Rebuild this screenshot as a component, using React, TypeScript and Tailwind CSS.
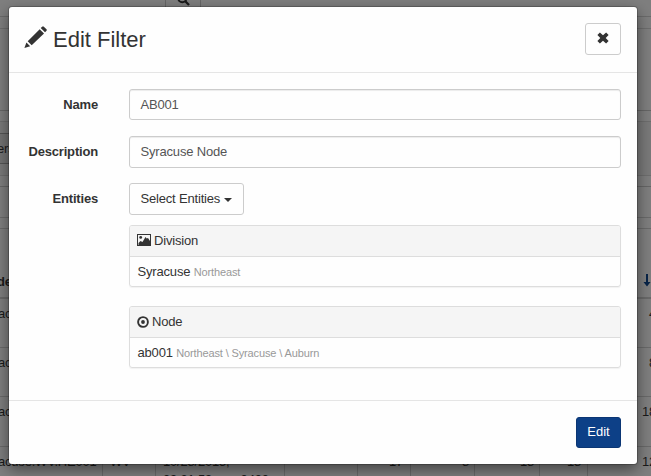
import React from "react";

const hiddenRows = [
  { last: "4", height: "h-[49px]" },
  { last: "8", height: "h-[49px]" },
  { last: "18", height: "h-[50px]" },
];

function Pencil() {
  return (
    <svg className="h-[24px] w-[24px] shrink-0" viewBox="0 0 24 24" fill="#333333">
      <path d="M18.2 1.7 Q19 .9 19.8 1.7 L22.5 4.3 Q23.2 5 22.5 5.8 L21 7.3 L16.7 3.1Z" />
      <path d="M15.7 4.2 L20 8.4 L7.7 20.2 L3.7 16.2Z" />
      <path d="M2.4 17.4 L6.2 21.2 L.4 23Z" />
    </svg>
  );
}

function Cross() {
  return (
    <svg className="h-3 w-3" viewBox="0 0 12 12" fill="#333333">
      <path d="M2.9 .4 6 3.3 9.1 .4 11.6 2.9 8.7 6 11.6 9.1 9.1 11.6 6 8.7 2.9 11.6 .4 9.1 3.3 6 .4 2.9Z" />
    </svg>
  );
}

function Picture() {
  return (
    <svg className="h-3 w-[14px] -translate-y-px" viewBox="0 0 14 12" fill="#333333">
      <path fillRule="evenodd" d="M0 0h14v12H0z M1 1v10h12V1z" />
      <circle cx="3.7" cy="3.4" r="1.4" />
      <path d="M1.5 11V9l2-2 2 1 3-5 1.2 1.6L11 4l2 3v4z" />
    </svg>
  );
}

function Target() {
  return (
    <svg className="h-3 w-3" viewBox="0 0 12 12">
      <circle cx="6" cy="6" r="4.9" fill="none" stroke="#333333" strokeWidth="1.9" />
      <circle cx="6" cy="6" r="1.9" fill="#333333" />
    </svg>
  );
}

function Backdrop() {
  return (
    <div className="flex h-[476px] w-[651px] flex-col overflow-hidden bg-[#7f7f7f] text-[13px] leading-[18px] tracking-[-0.2px] text-[#1a1a1a]">
      <div className="flex h-[17px] shrink-0 border-b border-[#6b6b6b] pl-[165px]">
        <div className="flex h-[10px] w-9 justify-center border-x border-[#666666]">
          <svg className="-mt-[7px] h-[13px] w-[13px]" viewBox="0 0 13 13" fill="none" stroke="#1a1a1a">
            <circle cx="5.3" cy="5.3" r="4" strokeWidth="2" />
            <path d="M8.3 8.3 12 12" strokeWidth="2.3" />
          </svg>
        </div>
      </div>
      <div className="h-3 shrink-0 border-b border-[#6e6e6e]" />
      <div className="h-[82px] shrink-0 border-b border-[#666666]" />
      <div className="h-[11px] shrink-0 border-b border-[#6e6e6e]" />
      <div className="h-[54px] shrink-0 border-b border-[#6e6e6e] bg-[#7a7a7a] pt-[11px]">
        <div className="h-[31px] w-8 border-y border-[#555555] bg-[#737373] pt-1.5">
          <span className="-ml-[3px]">ers</span>
        </div>
      </div>
      <div className="h-[11px] shrink-0 border-b border-[#666666]" />
      <div className="h-[31px] shrink-0 border-b border-[#6a6a6a]" />
      <div className="h-[11px] shrink-0 border-b border-[#6a6a6a]" />
      <div className="flex h-[70px] shrink-0 items-end justify-between border-b-2 border-[#6a6a6a] pb-[6px] font-bold">
        <span className="-ml-[3px]">de</span>
        <svg className="mb-1 h-[13px] w-2" viewBox="0 0 8 13" fill="#082448">
          <path d="M3 0h2v8h2.5L4 12.5.5 8H3z" />
        </svg>
      </div>
      {hiddenRows.map((row) => (
        <div
          key={row.last}
          className={`flex shrink-0 justify-between border-b border-[#6a6a6a] pt-[6px] ${row.height}`}
        >
          <span className="-ml-0.5">ac</span>
          <span className="-mr-[5px]">{row.last}</span>
        </div>
      ))}
      <div className="flex h-[50px] shrink-0 *:shrink-0 *:border-r *:border-[#6a6a6a] *:pt-[6px]">
        <div className="w-[103px]">
          <span className="-ml-0.5">acuse.WV.HE001</span>
        </div>
        <div className="w-[53px] pl-[7px]">WV</div>
        <div className="w-[129px] pl-[7px]">
          10/28/2015,
          <br />
          09:31:59 am -0400
        </div>
        <div className="w-[73px]" />
        <div className="w-[53px] pr-[7px] text-right">17</div>
        <div className="w-[64px] pr-[5px] text-right">8</div>
        <div className="w-[65px] pr-[5px] text-right">18</div>
        <div className="w-[48px] pr-1.5 text-right">18</div>
        <div className="w-[70px] pr-px text-right">12</div>
      </div>
    </div>
  );
}

function Field({ label, children }: { label: string; children: React.ReactNode }) {
  return (
    <div className="flex">
      <div className="w-[89px] shrink-0 pt-[7px] text-right font-bold">{label}</div>
      <div className="ml-[31px] w-[492px]">{children}</div>
    </div>
  );
}

function TextInput({ value, height }: { value: string; height: string }) {
  return (
    <div
      className={`flex items-center rounded-[3px] border border-[#cccccc] pl-[10.5px] text-[#555555] shadow-[inset_0_1px_1px_rgba(0,0,0,0.075)] ${height}`}
    >
      {value}
    </div>
  );
}

function Panel({
  icon,
  title,
  name,
  path,
  className,
}: {
  icon: React.ReactNode;
  title: string;
  name: string;
  path: string;
  className: string;
}) {
  return (
    <div className={`h-[62px] rounded-[3px] border border-[#dddddd] shadow-[0_1px_1px_rgba(0,0,0,0.05)] ${className}`}>
      <div className="flex h-[31px] items-center gap-[3px] rounded-t-[2px] border-b border-[#dddddd] bg-[#f5f5f5] pl-[7px]">
        {icon}
        <span>{title}</span>
      </div>
      <div className="h-[29px] pl-[7.5px] leading-[29px]">
        {name} <span className="text-[11px] tracking-[-0.13px] text-[#999999]">{path}</span>
      </div>
    </div>
  );
}

export default function App() {
  return (
    <div className="relative h-[476px] w-[651px] overflow-hidden font-['Liberation_Sans',Arial,sans-serif]">
      <Backdrop />
      <div className="absolute left-[9px] top-[7px] flex h-[457px] w-[628px] flex-col rounded-[3px] bg-[#fefefe] text-[13px] leading-[18px] tracking-[-0.18px] text-[#333333] shadow-[0_5px_15px_rgba(0,0,0,0.5),0_0_0_1px_rgba(0,0,0,0.2)]">
        <div className="flex h-[66px] shrink-0 items-start justify-between border-b border-[#e5e5e5] pl-[15px] pr-4 pt-4">
          <div className="flex items-start gap-[5px] pt-[2px]">
            <Pencil />
            <h4 className="pt-px text-[22px] leading-[28px] tracking-normal">Edit Filter</h4>
          </div>
          <button className="flex h-8 w-9 items-center justify-center rounded-[3px] border border-[#cccccc] pb-0.5">
            <Cross />
          </button>
        </div>
        <div className="flex h-[327px] shrink-0 flex-col gap-4 pt-4">
          <Field label="Name">
            <TextInput value="AB001" height="h-[31px]" />
          </Field>
          <Field label="Description">
            <TextInput value="Syracuse Node" height="h-8" />
          </Field>
          <div className="-mt-px">
            <Field label="Entities">
              <button className="flex h-8 w-[115px] items-center rounded-[3px] border border-[#cccccc] pl-[10.5px]">
                Select Entities
                <span className="ml-1 mt-0.5 border-x-4 border-t-4 border-x-transparent border-t-[#333333]" />
              </button>
              <Panel className="mt-[10px]" icon={<Picture />} title="Division" name="Syracuse" path="Northeast" />
              <Panel
                className="mt-[19px]"
                icon={<Target />}
                title="Node"
                name="ab001"
                path="Northeast \ Syracuse \ Auburn"
              />
            </Field>
          </div>
        </div>
        <div className="flex grow items-start justify-end border-t border-[#e5e5e5] pr-4 pt-4">
          <button className="flex h-[31px] w-[45px] items-center justify-center rounded-[3px] border border-[#0b3674] bg-[#0d4087] pb-0.5 tracking-normal text-white">
            Edit
          </button>
        </div>
      </div>
    </div>
  );
}
